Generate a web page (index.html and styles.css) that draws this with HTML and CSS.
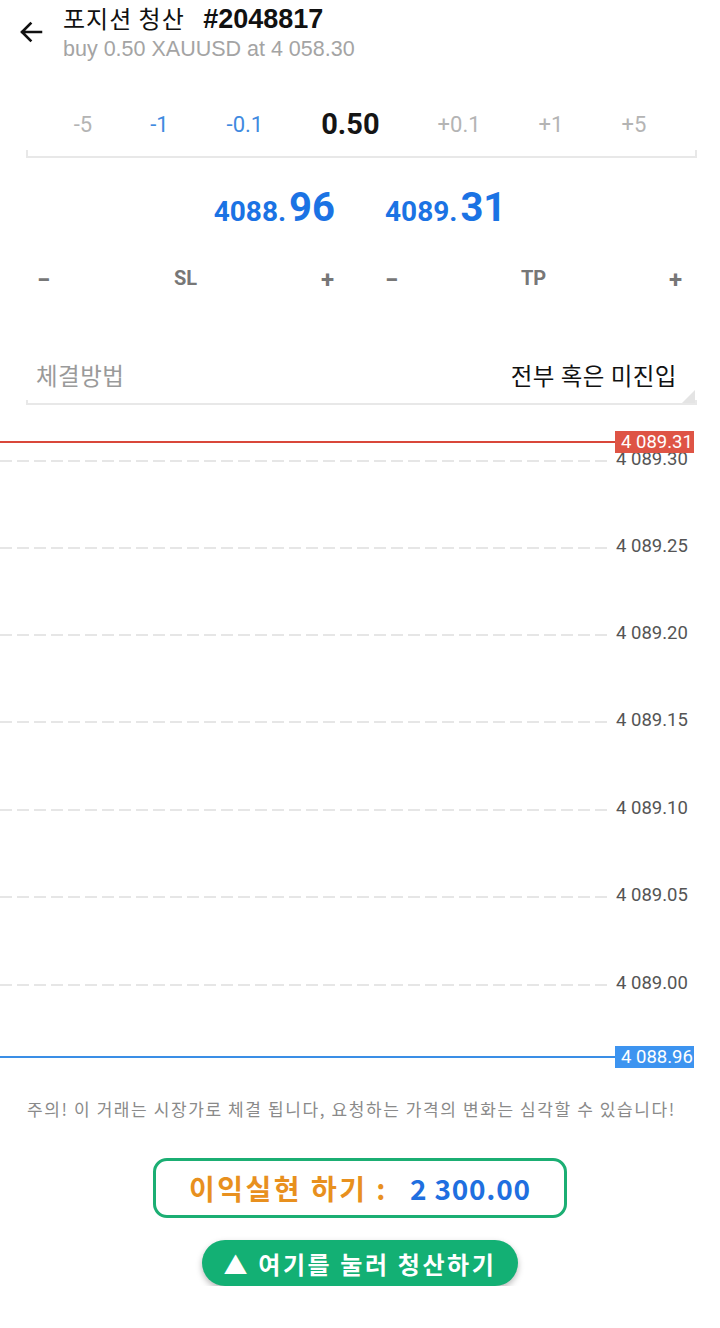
FILE: index.html
```html
<!DOCTYPE html>
<html>
    <head>
        <meta charset="utf-8">
        <title>포지션 청산</title>
        <link rel="stylesheet" href="styles.css">
    </head>

    <body>
        <div class="header">
            <svg class="back" width="28" height="28" viewBox="0 0 24 24">
                <path d="M20.5 12H4.5M11.5 4.8l-7.2 7.2 7.2 7.2" fill="none" stroke="#111" stroke-width="2.3" stroke-linecap="square"/>
            </svg>
            <div class="titles">
                <div class="title">포지션 청산 <b>#2048817</b></div>
                <div class="sub">buy 0.50 XAUUSD at 4 058.30</div>
            </div>
        </div>

        <div class="volume">
            <span class="step">-5</span>
            <span class="step blue">-1</span>
            <span class="step blue">-0.1</span>
            <span class="vol">0.50</span>
            <span class="step">+0.1</span>
            <span class="step">+1</span>
            <span class="step">+5</span>
        </div>
        <div class="line-box"></div>

        <div class="prices">
            <div class="price"><small>4088.</small>96</div>
            <div class="price"><small>4089.</small>31</div>
        </div>

        <div class="levels">
            <div class="level left">
                <span class="sign">&minus;</span><span>SL</span><span class="sign">+</span>
            </div>
            <div class="level right">
                <span class="sign">&minus;</span><span>TP</span><span class="sign">+</span>
            </div>
        </div>

        <div class="field">
            <span class="label">체결방법</span>
            <span class="value">전부 혹은 미진입</span>
        </div>
        <div class="line-box field-line"></div>

        <div id="chart">
            <div class="grid" style="top: 40px;"><span>4 089.30</span></div>
            <div class="grid" style="top: 127px;"><span>4 089.25</span></div>
            <div class="grid" style="top: 214px;"><span>4 089.20</span></div>
            <div class="grid" style="top: 301px;"><span>4 089.15</span></div>
            <div class="grid" style="top: 389px;"><span>4 089.10</span></div>
            <div class="grid" style="top: 476px;"><span>4 089.05</span></div>
            <div class="grid" style="top: 564px;"><span>4 089.00</span></div>

            <div class="quote ask" style="top: 21px;"><span>4 089.31</span></div>
            <div class="quote bid" style="top: 636px;"><span>4 088.96</span></div>
        </div>

        <p class="warn">주의! 이 거래는 시장가로 체결 됩니다, 요청하는 가격의 변화는 심각할 수 있습니다!</p>

        <div class="profit">
            <span class="orange">이익실현 하기 :</span> <span class="amount">2 300.00</span>
        </div>

        <div class="close-wrap">
            <button class="close">&#9650; 여기를 눌러 청산하기</button>
        </div>
    </body>
</html>
```

FILE: styles.css
```css
body {
    margin: 0;
    background: #fff;
    font-family: Roboto, "Noto Sans CJK KR", sans-serif;
    color: #111;
    width: 720px;
}

.header {
    display: flex;
    align-items: flex-start;
    height: 76px;
    padding-left: 17px;
}
.back {margin-top: 18px;}
.titles {margin-left: 18px;}
.title {
    font-family: "Noto Sans CJK KR", sans-serif;
    font-size: 24px;
    letter-spacing: 1px;
    line-height: 35px;
    color: #111;
}
.title b {
    font-family: "Liberation Sans", Arial, sans-serif;
    font-size: 27px;
    letter-spacing: 0;
    margin-left: 12px;
}
.sub {
    font-family: "Liberation Sans", Arial, sans-serif;
    font-size: 21.5px;
    line-height: 24px;
    color: #a4a4a4;
}

.volume {
    display: flex;
    justify-content: center;
    align-items: center;
    gap: 58px;
    height: 52px;
    margin-top: 22px;
}
.step {font-size: 22px; color: #b4b4b4;}
.step.blue {color: #3f8ae0;}
.vol {font-size: 29px; font-weight: bold; color: #151515;}

.line-box {
    margin: 0 23px 0 26px;
    height: 6px;
    border: 2px solid #e8e8e8;
    border-top: none;
}

.prices {
    display: flex;
    justify-content: center;
    gap: 50px;
    height: 78px;
    align-items: center;
    margin-top: 10px;
}
.price {
    font-size: 40px;
    font-weight: bold;
    color: #1b73e4;
}
.price small {font-size: 28px; margin-right: 3px;}

.levels {
    display: flex;
    margin: 14px 26px 0;
    height: 40px;
    align-items: center;
    color: #777;
    font-weight: bold;
    font-size: 20px;
}
.level {
    flex: 1;
    display: flex;
    justify-content: space-between;
}
.level.left {padding: 0 26px 0 11px;}
.level.right {padding: 0 12px 0 25px;}
.sign {font-size: 24px;}

.field {
    display: flex;
    justify-content: space-between;
    align-items: center;
    margin: 50px 43px 0 36px;
    height: 50px;
    font-family: "Noto Sans CJK KR", sans-serif;
    font-size: 23.5px;
    letter-spacing: 0.5px;
}
.field .label {color: #9a9a9a;}
.field .value {color: #111;}
.field-line {position: relative; height: 3px;}
.field-line::after {
    content: "";
    position: absolute;
    right: 0;
    bottom: 0;
    border-left: 13px solid transparent;
    border-bottom: 13px solid #e4e4e4;
}

#chart {
    position: relative;
    height: 660px;
    margin-top: 15px;
}
.grid {
    position: absolute;
    left: 0;
    right: 112px;
    height: 2px;
    background: repeating-linear-gradient(90deg, #e6e6e6 0 12px, transparent 12px 17px);
}
.grid span {
    position: absolute;
    left: 616px;
    top: -12px;
    font-size: 18.5px;
    color: #555;
    white-space: nowrap;
}
.quote {
    position: absolute;
    left: 0;
    width: 615px;
    height: 2px;
}
.quote span {
    position: absolute;
    left: 615px;
    top: -10px;
    width: 79px;
    height: 22px;
    line-height: 22px;
    padding-left: 6px;
    box-sizing: border-box;
    color: #fff;
    font-size: 18.5px;
    white-space: nowrap;
    overflow: hidden;
}
.ask {background: #d9473a;}
.ask span {background: #de5445;}
.bid {background: #3a8ee6;}
.bid span {background: #3d94f0;}

.warn {
    margin: 16px 0 0 27px;
    font-family: "Noto Sans CJK KR", sans-serif;
    font-size: 17px;
    letter-spacing: 1.6px;
    color: #8a8a8a;
    line-height: 26px;
    white-space: nowrap;
}

.profit {
    width: 414px;
    height: 60px;
    box-sizing: border-box;
    margin: 36px 0 0 153px;
    border: 3px solid #1bae73;
    border-radius: 14px;
    display: flex;
    align-items: center;
    justify-content: center;
    gap: 22px;
    font-family: "Noto Sans CJK KR", sans-serif;
    font-weight: bold;
    font-size: 28px;
}
.orange {color: #e8901e; letter-spacing: 2.5px;}
.amount {color: #1f6fe0; letter-spacing: 0.8px;}

.close-wrap {
    display: flex;
    justify-content: center;
    margin-top: 22px;
}
.close {
    width: 316px;
    height: 46px;
    border: none;
    border-radius: 23px;
    background: #13b074;
    color: #fff;
    font-family: "Noto Sans CJK KR", sans-serif;
    font-weight: bold;
    font-size: 24px;
    letter-spacing: 2.6px;
    box-shadow: 0 3px 6px rgba(0, 0, 0, 0.28);
}
```
